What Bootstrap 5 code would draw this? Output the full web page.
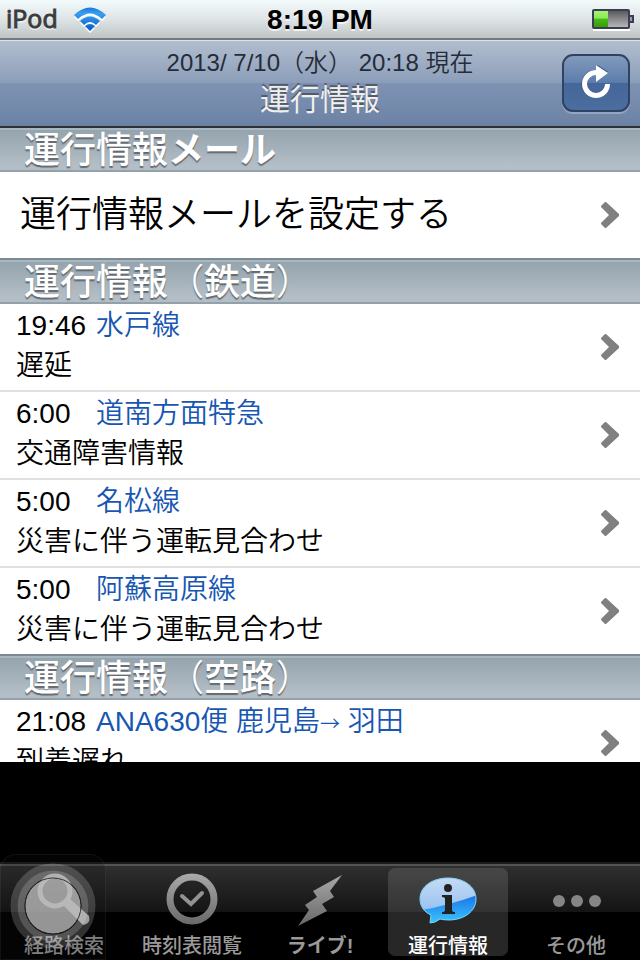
<!DOCTYPE html>
<html lang="ja">
<head>
<meta charset="utf-8">
<meta name="viewport" content="width=device-width, initial-scale=1">
<title>運行情報</title>
<link href="https://cdn.jsdelivr.net/npm/bootstrap@5.3.0/dist/css/bootstrap.min.css" rel="stylesheet">
<style>
  body { font-family: "Liberation Sans", "Noto Sans CJK JP", sans-serif; background: #000; color: #000; }
  .status-bar { height: 40px; padding: 1px 6px 0; background: linear-gradient(#f3fafc, #dfe5e7 50%, #bfc5c6); border-bottom: 2px solid #727b7d; text-shadow: 0 2px 0 rgba(255,255,255,.7); }
  .device-name { font: 25px/34px "Open Sans", sans-serif; color: #3c3c3c; -webkit-text-stroke: 1px #3c3c3c; margin-top: -3px; }
  .clock { font-size: 28px; line-height: 36px; }
  .title-bar { height: 88px; padding: 8px 10px 0; background: linear-gradient(#b2becf, #8b9db9 50%, #7e93b4 50%, #6c82a4); border-top: 1px solid #dde3ea; border-bottom: 2px solid #2d3239; }
  .as-of { font-size: 24px; line-height: 28px; color: #252c38; font-weight: 350; }
  .page-name { font-size: 30px; line-height: 46px; color: #efefef; text-shadow: 0 -2px 0 #555b66; }
  .side { width: 68px; }
  .reload { width: 68px; height: 58px; border: 2px solid #2f4462; border-radius: 11px; background: linear-gradient(#829abd, #5b7caa 50%, #44669a 50%, #4b6d9f); box-shadow: 0 2px 0 rgba(255,255,255,.25); margin-top: 5px; }
  .group-head { height: 46px; padding: 1px 0 0 24px; font-size: 36px; line-height: 44px; color: #fff; font-weight: 500; text-shadow: 0 2px 1px #63696f; background: linear-gradient(#93a2ac, #b4bec6 90%); border-top: 2px solid #7b8a92; border-bottom: 2px solid #93a1ab; box-shadow: inset 0 2px 0 #a9b7c0; }
  .group-head.first { height: 44px; border-top: 0; }
  .paren { font-weight: 350; }
  .entry { color: #000; min-height: 86px; padding: 0 21px 0 16px; font-weight: 350; }
  .entry + .entry { min-height: 88px; border-top: 2px solid #e0e0e0; }
  .entry-lines { font-size: 28px; line-height: 40px; padding-bottom: 3px; }
  .entry-time { width: 80px; font-weight: 400; }
  .entry-name { color: #1757b2; }
  .arrow { font: 350 20px/24px "Noto Sans CJK JP", sans-serif; }
  .mail-label { font-size: 36px; line-height: 54px; padding-left: 4px; }
  .ad-slot { height: 100px; }
  .tab-bar { height: 98px; padding-bottom: 4px; background: linear-gradient(#303030, #141414 48px, #000 48px); border-top: 2px solid #1b1b1b; box-shadow: inset 0 2px 0 #535353; }
  .tab { flex: 1 1 0; margin: 4px 4px 0; border-radius: 7px; color: #9a9a9a; font-size: 20px; line-height: 26px; font-weight: 500; }
  .tab.current { background: linear-gradient(#474747, #333 44px, #272727 44px); color: #fff; }
  .tab svg { margin-top: 1px; flex-shrink: 0; }
  .touch-pad { position: absolute; left: 0; bottom: 0; width: 106px; height: 106px; border: 1px solid rgba(255,255,255,.06); border-radius: 16px 16px 0 0; background: rgba(20,20,20,.2); padding: 0; }
</style>
<script src="https://cdn.jsdelivr.net/npm/bootstrap@5.3.0/dist/js/bootstrap.bundle.min.js"></script>
</head>
<body>
<svg class="d-none" aria-hidden="true">
  <symbol id="chevron" viewBox="0 0 18 26"><path d="M0 4 4 0H5L18 12V14L5 26H4L0 22V21L8 13 0 5Z" fill="#808080"/></symbol>
</svg>
<div class="vh-100 d-flex flex-column overflow-hidden position-relative">
  <div class="status-bar d-flex align-items-center flex-shrink-0">
    <div class="d-flex align-items-center col gap-3">
      <span class="device-name">iPod</span>
      <svg width="32" height="26" viewBox="0 0 32 26" role="img" aria-label="Wi-Fi">
        <defs><linearGradient id="wave" x2="0" y2="1"><stop stop-color="#1877d8"/><stop offset=".25" stop-color="#36a0ee"/><stop offset="1" stop-color="#0758c9"/></linearGradient></defs>
        <g transform="translate(0 2)" fill="#fff"><path d="M0 8Q16-7 32 8L28 12Q16 1 4 12ZM6 14Q16 5 26 14L22 18Q16 12 10 18ZM11 19Q16 15 21 19L16 24Z"/></g>
        <path fill="url(#wave)" d="M0 8Q16-7 32 8L28 12Q16 1 4 12ZM6 14Q16 5 26 14L22 18Q16 12 10 18ZM11 19Q16 15 21 19L16 24Z"/>
      </svg>
    </div>
    <div class="clock fw-bold">8:19 PM</div>
    <div class="col text-end d-flex justify-content-end">
      <svg width="42" height="22" viewBox="0 0 42 22" role="img" aria-label="バッテリー">
        <defs>
          <linearGradient id="charge" x2="0" y2="1"><stop stop-color="#a4f56e"/><stop offset=".45" stop-color="#8bea55"/><stop offset=".5" stop-color="#45bd16"/><stop offset="1" stop-color="#3a9a08"/></linearGradient>
          <linearGradient id="spent" x2="0" y2="1"><stop stop-color="#555"/><stop offset="1" stop-color="#bbb"/></linearGradient>
        </defs>
        <path d="M1 21h37" stroke="#fff" stroke-width="2"/>
        <rect x="1" y="1" width="36" height="18" rx="1" fill="url(#spent)" stroke="#3a3e54" stroke-width="2"/>
        <rect x="2" y="2" width="14" height="16" fill="url(#charge)"/>
        <path d="M38 7h3v6h-3" fill="#99a" stroke="#3a3e54" stroke-width="2"/>
      </svg>
    </div>
  </div>

  <header class="title-bar d-flex align-items-start flex-shrink-0">
    <div class="side"></div>
    <div class="flex-grow-1 text-center">
      <div class="as-of">2013/ 7/10（水） 20:18 現在</div>
      <h1 class="page-name m-0 fw-normal">運行情報</h1>
    </div>
    <button type="button" class="reload d-flex align-items-center justify-content-center p-0" aria-label="更新">
      <svg width="32" height="36" viewBox="0 0 32 36">
        <path d="M27 19A11.500 11.500 0 1 1 16 7.500" fill="none" stroke="#2f4a70" stroke-width="5"/>
        <path d="M27.500 19A11.500 11.500 0 1 1 16 7.500" fill="none" stroke="#fff" stroke-width="5"/>
        <path d="M16 -1 28 7 16 15Z" fill="#2f4a70"/><path d="M16 0 28 8 16 17Z" fill="#fff"/>
      </svg>
    </button>
  </header>

  <main class="flex-grow-1 overflow-hidden bg-white">
    <h2 class="group-head first m-0">運行情報<span class="fw-bold">メール</span></h2>
    <a href="#mail" class="entry d-flex align-items-center justify-content-between text-decoration-none">
      <span class="mail-label">運行情報メールを設定する</span>
      <svg width="18" height="26"><use href="#chevron"/></svg>
    </a>
    <h2 class="group-head m-0">運行情報<span class="paren">（</span>鉄道<span class="paren">）</span></h2>
    <a href="#mito" class="entry d-flex align-items-center justify-content-between text-decoration-none">
      <div class="entry-lines"><div class="d-flex"><span class="entry-time">19:46</span><span class="entry-name">水戸線</span></div><div>遅延</div></div>
      <svg width="18" height="26"><use href="#chevron"/></svg>
    </a>
    <a href="#donan" class="entry d-flex align-items-center justify-content-between text-decoration-none">
      <div class="entry-lines"><div class="d-flex"><span class="entry-time">6:00</span><span class="entry-name">道南方面特急</span></div><div>交通障害情報</div></div>
      <svg width="18" height="26"><use href="#chevron"/></svg>
    </a>
    <a href="#meisho" class="entry d-flex align-items-center justify-content-between text-decoration-none">
      <div class="entry-lines"><div class="d-flex"><span class="entry-time">5:00</span><span class="entry-name">名松線</span></div><div>災害に伴う運転見合わせ</div></div>
      <svg width="18" height="26"><use href="#chevron"/></svg>
    </a>
    <a href="#aso" class="entry d-flex align-items-center justify-content-between text-decoration-none">
      <div class="entry-lines"><div class="d-flex"><span class="entry-time">5:00</span><span class="entry-name">阿蘇高原線</span></div><div>災害に伴う運転見合わせ</div></div>
      <svg width="18" height="26"><use href="#chevron"/></svg>
    </a>
    <h2 class="group-head m-0">運行情報<span class="paren">（</span>空路<span class="paren">）</span></h2>
    <a href="#ana630" class="entry d-flex align-items-center justify-content-between text-decoration-none">
      <div class="entry-lines"><div class="d-flex"><span class="entry-time">21:08</span><span class="entry-name">ANA630便 鹿児島<span class="arrow">→</span> 羽田</span></div><div>到着遅れ</div></div>
      <svg width="18" height="26"><use href="#chevron"/></svg>
    </a>
  </main>

  <div class="ad-slot flex-shrink-0"></div>

  <nav class="tab-bar d-flex flex-shrink-0">
    <a href="#route" class="tab d-flex flex-column align-items-center text-decoration-none">
      <svg width="64" height="64" viewBox="0 0 64 64">
        <defs><linearGradient id="metal" x1="0" y1="4" x2="0" y2="58" gradientUnits="userSpaceOnUse"><stop stop-color="#aaa"/><stop offset="1" stop-color="#666"/></linearGradient></defs>
        <circle cx="23" cy="22" r="15" fill="none" stroke="#aaa" stroke-width="5"/><path d="M31 36 37 29 57 47Q59 55 51 56Z" fill="#aaa"/>
      </svg>経路検索</a>
    <a href="#timetable" class="tab d-flex flex-column align-items-center text-decoration-none">
      <svg width="64" height="64" viewBox="0 0 64 64"><circle cx="32" cy="30" r="22" fill="none" stroke="url(#metal)" stroke-width="7"/><path d="M22 27 31 35 42 24" fill="none" stroke="#929292" stroke-width="4" stroke-linecap="round"/></svg>時刻表閲覧</a>
    <a href="#live" class="tab d-flex flex-column align-items-center text-decoration-none fw-bold">
      <svg width="64" height="64" viewBox="0 0 64 64"><path d="M54 6 25 22 29 28 17 36 21 41 10 57 39 42 34 35 46 28 42 22Z" fill="url(#metal)"/></svg>ライブ!</a>
    <a href="#status" class="tab current d-flex flex-column align-items-center text-decoration-none" aria-current="page">
      <svg width="64" height="64" viewBox="0 0 64 64">
        <defs>
          <linearGradient id="gloss" x2="0" y2="1"><stop stop-color="#cfe1f7"/><stop offset="1" stop-color="#7db2ec"/></linearGradient>
          <linearGradient id="deep" x1="0" y1="24" x2="0" y2="54" gradientUnits="userSpaceOnUse"><stop stop-color="#176ee8"/><stop offset="1" stop-color="#3bc5fc"/></linearGradient>
          <clipPath id="bubble"><path d="M32 9C47 9 60 17 60 30S47 51 33 51Q28 51 24 50Q19 54 14 54L15 46C8 43 4 37 4 30 4 17 17 9 32 9Z"/></clipPath>
        </defs>
        <g clip-path="url(#bubble)"><rect width="64" height="64" fill="url(#gloss)"/><path d="M0 42Q32 37 64 25V64H0Z" fill="url(#deep)"/></g>
        <path d="M32 9C47 9 60 17 60 30S47 51 33 51Q28 51 24 50Q19 54 14 54L15 46C8 43 4 37 4 30 4 17 17 9 32 9Z" fill="none" stroke="#79d3f8" stroke-width="1"/>
        <circle cx="32" cy="19" r="4" fill="#222"/><path d="M26 26H36V41Q36 43 39 43V45H26V43Q29 43 29 41V30Q29 28 26 28Z" fill="#222"/>
      </svg>運行情報</a>
    <a href="#more" class="tab d-flex flex-column align-items-center text-decoration-none">
      <svg width="64" height="64" viewBox="0 0 64 64" fill="#858585"><circle cx="15" cy="32" r="6"/><circle cx="33" cy="32" r="6"/><circle cx="51" cy="32" r="6"/></svg>その他</a>
  </nav>

  <button type="button" class="touch-pad" aria-label="AssistiveTouch">
    <svg class="d-block" width="104" height="104" viewBox="0 0 104 104">
      <circle cx="52" cy="51" r="39" fill="none" stroke="#fff" stroke-width="7" opacity=".18"/>
      <circle cx="52" cy="51" r="32" fill="none" stroke="#fff" stroke-width="7" opacity=".32"/>
      <circle cx="52" cy="51" r="28" fill="#c8c8c8" stroke="#222" stroke-width="1" opacity=".74"/>
    </svg>
  </button>
</div>
</body>
</html>
